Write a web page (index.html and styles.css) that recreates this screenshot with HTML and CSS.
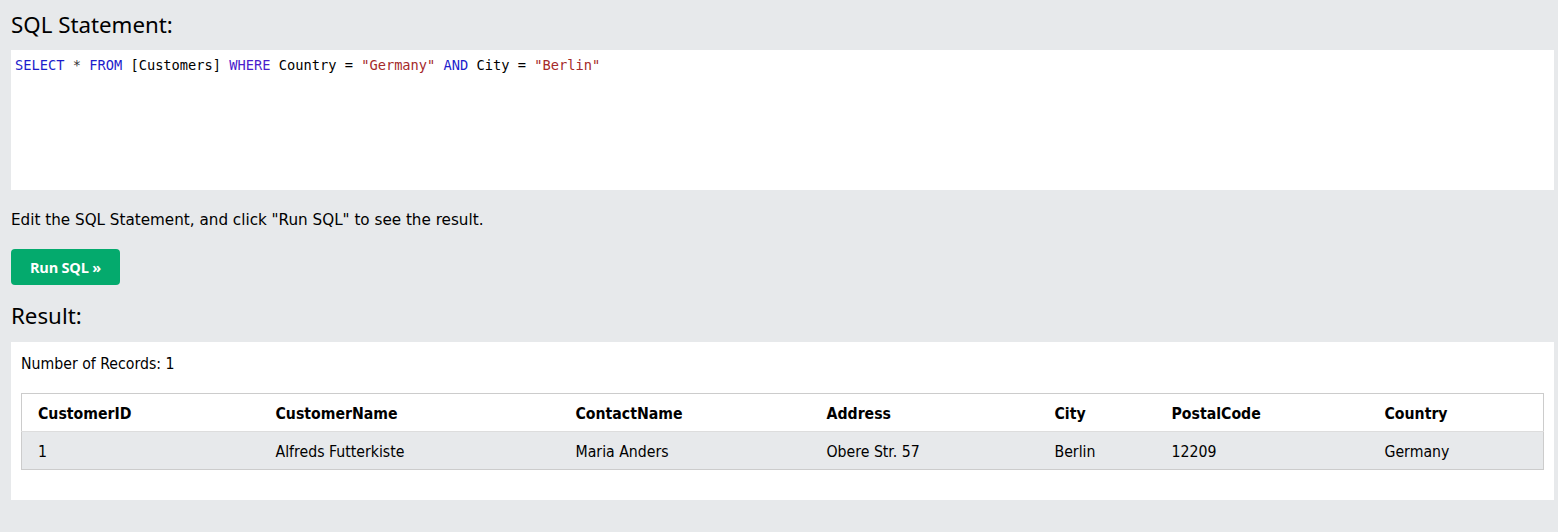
FILE: index.html
```html
<!DOCTYPE html>
<html>
<head>
<meta charset="utf-8">
<link rel="stylesheet" href="styles.css">
</head>
<body>
<div class="page">
  <h2 class="title">SQL Statement:</h2>
  <div class="code"><span class="kw">SELECT</span> <span class="op">*</span> <span class="kw">FROM</span> [Customers] <span class="kw2">WHERE</span> Country = <span class="str">"Germany"</span> <span class="kw">AND</span> City = <span class="str">"Berlin"</span></div>
  <p class="hint">Edit the SQL Statement, and click "Run SQL" to see the result.</p>
  <button class="run">Run SQL »</button>
  <h2 class="title result-title">Result:</h2>
  <div class="result">
    <div class="count">Number of Records: 1</div>
    <table class="grid">
      <colgroup>
        <col class="c1"><col class="c2"><col class="c3"><col class="c4"><col class="c5"><col class="c6"><col class="c7">
      </colgroup>
      <tr class="head">
        <th>CustomerID</th><th>CustomerName</th><th>ContactName</th><th>Address</th><th>City</th><th>PostalCode</th><th>Country</th>
      </tr>
      <tr class="row">
        <td>1</td><td>Alfreds Futterkiste</td><td>Maria Anders</td><td>Obere Str. 57</td><td>Berlin</td><td>12209</td><td>Germany</td>
      </tr>
    </table>
  </div>
</div>
</body>
</html>
```
FILE: styles.css
```css
html, body {
  margin: 0;
  padding: 0;
  background: #e7e9eb;
}
.page {
  padding: 0 4px 32px 11px;
  color: #000;
}
.title {
  font-family: "Noto Sans", "Open Sans", sans-serif;
  font-weight: 400;
  font-size: 22.3px;
  line-height: 30px;
  margin: 0;
  padding-top: 10px;
  height: 40px;
  color: #000;
}
.code {
  background: #fff;
  height: 140px;
  box-sizing: border-box;
  padding: 6px 4px;
  font-family: "DejaVu Sans Mono", "Liberation Mono", monospace;
  font-size: 13.7px;
  line-height: 18px;
  color: #000;
  white-space: pre;
}
.kw { color: #1c1ccc; }
.kw2 { color: #4a1ccc; }
.op { color: #333; }
.str { color: #a52a2a; }
.hint {
  font-family: "DejaVu Sans", Verdana, sans-serif;
  font-size: 15.2px;
  line-height: 20px;
  margin: 20px 0 0 0;
}
.run {
  display: block;
  margin-top: 19px;
  width: 109px;
  height: 36px;
  border: none;
  border-radius: 4px;
  background: #04aa6d;
  color: #fff;
  font-family: "Open Sans", "Noto Sans", sans-serif;
  font-weight: 700;
  font-size: 14.5px;
  padding: 0;
  letter-spacing: -0.2px;
}
.result-title {
  padding-top: 16px;
  box-sizing: border-box;
  height: 57px;
}
.result {
  background: #fff;
  padding: 10px 10px 30px 10px;
}
.count {
  font-family: "DejaVu Sans", Verdana, sans-serif;
  font-stretch: condensed;
  font-size: 15.7px;
  line-height: 22px;
  padding-top: 1px;
  margin-bottom: 18px;
}
.grid {
  width: 100%;
  table-layout: fixed;
  border-collapse: collapse;
  border: 1px solid #ccc;
  font-family: "DejaVu Sans", Verdana, sans-serif;
  font-stretch: condensed;
  font-size: 15.7px;
}
.c1 { width: 238px; }
.c2 { width: 300px; }
.c3 { width: 251px; }
.c4 { width: 228px; }
.c5 { width: 117px; }
.c6 { width: 213px; }
.grid th, .grid td {
  text-align: left;
  padding: 2px 0 0 16px;
  height: 35px;
}
.grid th { font-weight: 700; }
.head { border-bottom: 1px solid #ddd; }
.row { background: #e7e9eb; }
```
